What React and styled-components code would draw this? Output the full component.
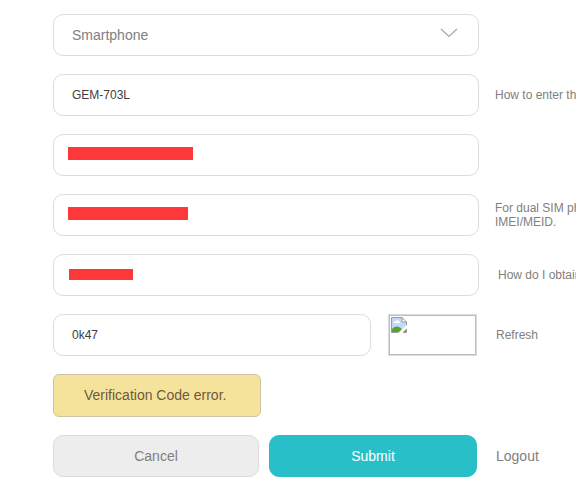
import React from "react";
import styled, { createGlobalStyle, css } from "styled-components";

const GlobalStyle = createGlobalStyle`
  *, *::before, *::after { box-sizing: border-box; }
  body {
    margin: 0;
    background: #fff;
    color: #808080;
    font-family: Arial, "Liberation Sans", sans-serif;
    font-size: 12px;
    line-height: 14px;
  }
`;

const Form = styled.form`
  display: flex;
  flex-direction: column;
  gap: 18px;
  padding: 14px 0 12px 53px;
  overflow: hidden;
`;

const Row = styled.div`
  display: flex;
  align-items: center;
`;

const Main = styled.div`
  position: relative;
  display: flex;
  flex: 0 1 ${(p) => (p.$narrow ? 424 : 426)}px;
  gap: ${(p) => p.$gap || 0}px;
  min-width: 0;
`;

const control = css`
  flex: 1 1 0;
  width: 100%;
  min-width: 0;
  height: 42px;
  margin: 0;
  padding: 0 18px;
  border: 1px solid #dcdcdc;
  border-radius: 10px;
  background: #fff;
  font-family: inherit;
`;

const TextInput = styled.input`
  ${control}
  color: #404040;
  font-size: 12px;
`;

const Select = styled.select`
  ${control}
  appearance: none;
  color: #808080;
  font-size: 14px;
`;

const Chevron = styled.svg`
  position: absolute;
  top: 14px;
  right: 21px;
  pointer-events: none;
`;

const Redaction = styled.span`
  position: absolute;
  top: ${(p) => (p.$small ? 15 : 13)}px;
  left: ${(p) => (p.$small ? 16 : 15)}px;
  width: ${(p) => p.$width}px;
  height: ${(p) => (p.$small ? 11 : 13)}px;
  background: #fc3838;
`;

const HelpLink = styled.a`
  flex: 1 0 76px;
  min-width: 0;
  margin-left: ${(p) => p.$gap || 16}px;
  color: #808080;
  font-size: ${(p) => (p.$large ? 14 : 12)}px;
  text-decoration: none;
  white-space: nowrap;
`;

const CaptchaFrame = styled.div`
  flex: 0 0 89px;
  height: 42px;
  padding: 2px;
  border: 1px solid #dcdcdc;
  box-shadow: inset 0 0 0 1px #bdbdbd;
`;

const ErrorMessage = styled.div`
  display: flex;
  align-items: center;
  min-width: 208px;
  height: 43px;
  padding: 0 30px 2px;
  border: 1px solid #cdc3a5;
  border-radius: 6px;
  background: #f6e39b;
  color: #6e5a3c;
  font-size: 14px;
`;

const Button = styled.button`
  flex: 0 1 ${(p) => (p.$primary ? 208 : 206)}px;
  height: 42px;
  padding: 0;
  border: 1px solid ${(p) => (p.$primary ? "#29bfc8" : "#dcdcdc")};
  border-radius: 10px;
  background: ${(p) => (p.$primary ? "#29bfc8" : "#ededed")};
  color: ${(p) => (p.$primary ? "#fff" : "#808080")};
  font-family: inherit;
  font-size: 14px;
`;

function BrokenImage() {
  return (
    <svg width="16" height="16" viewBox="0 0 16 16" role="img" aria-label="Verification code image" display="block">
      <path d="M0.5 0.5H11L15.5 5V8L8 15.5H0.5Z" fill="#c5d8f6" />
      <path d="M1 15V12C3 9.500 6 8.500 9 10.500L11 12L8 15Z" fill="#55a532" />
      <path d="M3 6C2.500 4.500 4.500 4 5 4.500C5.500 2.500 8 3 8 4.500C9.500 4.500 9.500 6 8.500 6Z" fill="#fff" />
      <path d="M11 0.5V5H15.5Z" fill="#fff" />
      <path d="M7.500 15.5H0.5V0.5H11L15.5 5V8.500M11 0.5V5H15.5M12 15.5H15.5V12" fill="none" stroke="#9a9a9a" />
      <path d="M15 12V15H12Z" fill="#55a532" />
      <path d="M8 16L16 8.500V11L11 16Z" fill="#fff" />
    </svg>
  );
}

function RedactedRow({ label, width, small, children }) {
  return (
    <Row>
      <Main>
        <TextInput type="text" aria-label={label} />
        <Redaction $width={width} $small={small} />
      </Main>
      {children}
    </Row>
  );
}

export default function App() {
  return (
    <>
      <GlobalStyle />
      <Form onSubmit={(e) => e.preventDefault()}>
        <Row>
          <Main>
            <Select aria-label="Product type" defaultValue="Smartphone">
              <option>Smartphone</option>
            </Select>
            <Chevron width="18" height="10" viewBox="0 0 18 10" aria-hidden="true">
              <path d="M1 1L9 8.500L17 1" fill="none" stroke="#a6a6a6" strokeWidth="1.200" />
            </Chevron>
          </Main>
        </Row>
        <Row>
          <Main>
            <TextInput type="text" aria-label="Product model" defaultValue="GEM-703L" />
          </Main>
          <HelpLink href="#model">How to enter the</HelpLink>
        </Row>
        <RedactedRow label="Serial number" width={125} />
        <RedactedRow label="IMEI/MEID" width={120}>
          <HelpLink as="div">
            For dual SIM phones
            <br />
            IMEI/MEID.
          </HelpLink>
        </RedactedRow>
        <RedactedRow label="Product ID" width={64} small>
          <HelpLink href="#obtain" $gap={19}>How do I obtain</HelpLink>
        </RedactedRow>
        <Row>
          <Main $narrow $gap={17}>
            <TextInput type="text" aria-label="Verification code" defaultValue="0k47" />
            <CaptchaFrame>
              <BrokenImage />
            </CaptchaFrame>
          </Main>
          <HelpLink href="#refresh" $gap={19}>Refresh</HelpLink>
        </Row>
        <Row>
          <ErrorMessage role="alert">Verification Code error.</ErrorMessage>
        </Row>
        <Row>
          <Main $narrow $gap={10}>
            <Button type="button">Cancel</Button>
            <Button type="submit" $primary>Submit</Button>
          </Main>
          <HelpLink href="#logout" $gap={19} $large>Logout</HelpLink>
        </Row>
      </Form>
    </>
  );
}
